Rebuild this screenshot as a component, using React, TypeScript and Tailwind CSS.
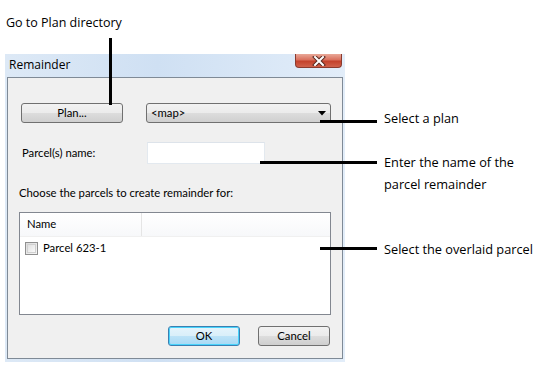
import React from "react";

const btn =
  "h-[20px] rounded-[3px] border border-[#707070] bg-[linear-gradient(#f2f2f2_0%,#ebebeb_50%,#dddddd_50%,#cfcfcf_100%)] flex items-center";

function CloseButton() {
  return (
    <div className="w-[47px] h-[14px] rounded-b-[4px] border border-t-0 border-[#8a3a2e] bg-[linear-gradient(#e9a898_0%,#d9705d_45%,#c4412b_55%,#d0614b_100%)] flex items-center justify-center">
      <svg width="14" height="10" viewBox="0 0 14 10">
        <path d="M3 1 L11 9 M11 1 L3 9" stroke="#5a2a22" strokeWidth="4" strokeLinecap="square" />
        <path d="M3 1 L11 9 M11 1 L3 9" stroke="#ffffff" strokeWidth="2" strokeLinecap="square" />
      </svg>
    </div>
  );
}

function Dialog() {
  return (
    <div className="ml-[5px] w-[340px] flex flex-col bg-[linear-gradient(90deg,#dde9f6,#cfe0f3_45%,#e2edf9)]">
      <div className="h-[23px] flex items-start justify-between pr-[3px]">
        <div className="pl-[4px] pt-[3px] text-[12px] leading-[16px] text-black">Remainder</div>
        <CloseButton />
      </div>
      <div
        className="mx-[2px] mb-[3px] border border-[#7f8a96] bg-[#f0f0f0] pl-[11px] pr-[10px] pt-[25px] pb-[12px] flex flex-col text-[11.3px] text-black"
        style={{ fontFamily: 'Lato, "Open Sans", sans-serif' }}
      >
        <div className="flex items-center h-[20px]">
          <div className={`${btn} ml-[2px] w-[102px] justify-center`}>Plan...</div>
          <div className={`${btn} ml-[23px] w-[185px] justify-between pl-[4px] pr-[4px]`}>
            <span>&lt;map&gt;</span>
            <svg width="8" height="5" viewBox="0 0 8 5">
              <path d="M0 0 H8 L4 4.5 Z" fill="#000" />
            </svg>
          </div>
        </div>
        <div className="flex items-center mt-[19px] h-[22px]">
          <span className="ml-[3px] w-[125px]">Parcel(s) name:</span>
          <div className="w-[118px] h-[22px] bg-white border border-[#e3e9ef] border-t-[#dde3ea]" />
        </div>
        <div className="mt-[21px] h-[16px] leading-[16px]">Choose the parcels to create remainder for:</div>
        <div className="mt-[11px] w-[312px] h-[103px] border border-[#828790] bg-white flex flex-col">
          <div className="h-[24px] flex border-b border-[#f0f0f0] bg-[linear-gradient(#ffffff,#f7f8fa)]">
            <div className="w-[122px] pl-[7px] flex items-center border-r border-[#e5e5e5]">Name</div>
          </div>
          <div className="flex items-center h-[22px] pl-[5px]">
            <div className="w-[13px] h-[13px] border border-[#8f8f8f] bg-[linear-gradient(135deg,#dcdcdc,#f6f6f6)] p-[1px]">
              <div className="w-full h-full border border-[#d0d0d0] bg-[linear-gradient(135deg,#e0e0e0,#fafafa)]" />
            </div>
            <span className="ml-[5px]">Parcel 623-1</span>
          </div>
        </div>
        <div className="mt-[11px] flex justify-end gap-[18px] pr-[2px]">
          <div className="h-[20px] w-[72px] rounded-[3px] border border-[#3c7fb1] bg-[linear-gradient(#e5f4fc_0%,#d9eff9_50%,#bde3f7_50%,#a7d9f5_100%)] flex items-center justify-center shadow-[inset_0_0_0_1px_#48d3fb]">
            OK
          </div>
          <div className={`${btn} w-[72px] justify-center`}>Cancel</div>
        </div>
      </div>
    </div>
  );
}

export default function App() {
  return (
    <div
      className="relative w-[546px] h-[369px] bg-white overflow-hidden text-black"
      style={{ fontFamily: '"Open Sans", "Noto Sans", sans-serif' }}
    >
      <div className="flex">
        <div className="w-[345px] flex flex-col">
          <div className="h-[54px] pl-[6px] pt-[14px] text-[12.5px] leading-[18px]">Go to Plan directory</div>
          <Dialog />
        </div>
        <div className="ml-[39px] pt-[107px] flex flex-col text-[12.75px] leading-[22px]">
          <div>Select a plan</div>
          <div className="mt-[22px]">
            Enter the name of the
            <br />
            parcel remainder
          </div>
          <div className="mt-[43px]">Select the overlaid parcel</div>
        </div>
      </div>
      {/* callout lines */}
      <div className="absolute left-[109px] top-[38px] w-[3px] h-[67px] bg-black" />
      <div className="absolute left-[320px] top-[120px] w-[57px] h-[3px] bg-black" />
      <div className="absolute left-[260px] top-[161px] w-[117px] h-[3px] bg-black" />
      <div className="absolute left-[320px] top-[247px] w-[57px] h-[3px] bg-black" />
    </div>
  );
}
